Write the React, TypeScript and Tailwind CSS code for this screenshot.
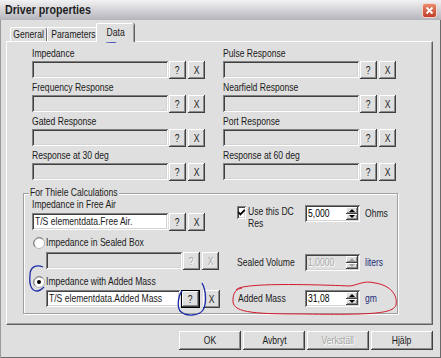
import React from "react";

const raised =
  "shadow-[inset_-1px_-1px_0_#404040,inset_1px_1px_0_#ffffff,inset_-2px_-2px_0_#8c8c8c]";
const sunken =
  "shadow-[inset_1px_1px_0_#808080,inset_-1px_-1px_0_#ffffff,inset_2px_2px_0_#404040,inset_-2px_-2px_0_#d4d4d4]";

// the dialog font is a narrow sans; Liberation Sans squeezed to match
function T({ children, center, className = "" }: { children: React.ReactNode; center?: boolean; className?: string }) {
  return (
    <span
      className={`inline-block scale-x-[0.78] whitespace-nowrap ${center ? "origin-center" : "origin-left"} ${className}`}
    >
      {children}
    </span>
  );
}

function Field({ w, value, white }: { w: string; value?: string; white?: boolean }) {
  return (
    <div
      className={`${w} h-[17px] overflow-hidden whitespace-nowrap pl-[3px] pt-[2px] text-[11px] leading-[13px] ${
        white ? "bg-white" : "bg-[#dfdfdf]"
      } ${sunken}`}
    >
      {value && <T>{value}</T>}
    </div>
  );
}

function SmallBtn({ label, disabled, focus }: { label: string; disabled?: boolean; focus?: boolean }) {
  if (focus) {
    return (
      <div className="flex h-[18px] w-[19px] border border-black">
        <div className={`flex flex-1 items-center justify-center bg-[#dfdfdf] text-[11px] ${raised}`}>
          <T center>{label}</T>
        </div>
      </div>
    );
  }
  return (
    <div
      className={`flex h-[18px] w-[17px] items-center justify-center bg-[#dfdfdf] text-[11px] ${raised} ${
        disabled ? "text-[#a4a4a4] [text-shadow:1px_1px_0_#ffffff]" : "text-[#1a1a1a]"
      }`}
    >
      <T center>{label}</T>
    </div>
  );
}

function FileRow({ value, white, disabled, focus }: { value?: string; white?: boolean; disabled?: boolean; focus?: boolean }) {
  return (
    <div className="flex items-start">
      <Field w="w-[136px]" value={value} white={white} />
      <div className="ml-[1px]">
        <SmallBtn label="?" disabled={disabled} focus={focus} />
      </div>
      <div className={focus ? "ml-[3px]" : "ml-[2px]"}>
        <SmallBtn label="X" disabled={disabled} />
      </div>
    </div>
  );
}

function FileField({ label }: { label: string }) {
  return (
    <div className="flex flex-col">
      <div className="h-[13px] text-[11px] leading-[13px]">
        <T>{label}</T>
      </div>
      <div className="mt-[1px]">
        <FileRow />
      </div>
    </div>
  );
}

function Tri({ up, disabled }: { up?: boolean; disabled?: boolean }) {
  return (
    <svg width="6" height="3" viewBox="0 0 6 3">
      <polygon points={up ? "0,3 3,0 6,3" : "0,0 3,3 6,0"} fill={disabled ? "#a0a0a0" : "#000000"} />
    </svg>
  );
}

function Spin({ value, disabled }: { value: string; disabled?: boolean }) {
  return (
    <div
      className={`flex h-[17px] w-[55px] items-stretch p-[2px] ${sunken} ${
        disabled ? "bg-[#dfdfdf] text-[#a8a8a8] [text-shadow:1px_1px_0_#ffffff]" : "bg-white text-black"
      }`}
    >
      <span className="flex-1 pl-[1px] text-[11px] leading-[13px]">
        <T>{value}</T>
      </span>
      <div className="flex w-[12px] flex-col">
        <div className={`flex flex-1 items-center justify-center bg-[#dfdfdf] ${raised}`}>
          <Tri up disabled={disabled} />
        </div>
        <div className={`flex flex-1 items-center justify-center bg-[#dfdfdf] ${raised}`}>
          <Tri disabled={disabled} />
        </div>
      </div>
    </div>
  );
}

function Radio({ checked }: { checked?: boolean }) {
  return (
    <svg width="12" height="12" viewBox="0 0 12 12">
      <circle cx="6" cy="6" r="5.5" fill="#ffffff" stroke="#b4b4b4" />
      <path d="M2.2 9.8 A5.4 5.4 0 0 1 9.8 2.2" fill="none" stroke="#6e6e6e" />
      {checked && <circle cx="6" cy="6" r="2" fill="#000000" />}
    </svg>
  );
}

function DialogBtn({ label, disabled }: { label: string; disabled?: boolean }) {
  return (
    <div
      className={`flex h-[19px] w-[62px] items-center justify-center bg-[#dfdfdf] text-[11px] ${raised} ${
        disabled ? "text-[#a4a4a4] [text-shadow:1px_1px_0_#ffffff]" : "text-[#1a1a1a]"
      }`}
    >
      <T center>{label}</T>
    </div>
  );
}

export default function App() {
  return (
    <div className="relative flex h-[358px] w-[441px] flex-col overflow-hidden bg-[#dfdfdf] font-['Liberation_Sans',Arial,sans-serif] text-[#1a1a1a] shadow-[inset_1px_0_0_#9a9a9a,inset_-1px_0_0_#6a6a6a,inset_0_-1px_0_#6a6a6a]">
      {/* title bar */}
      <div className="flex h-[20px] items-center justify-between bg-linear-to-b from-[#f2f2f4] via-[#d4d4d8] to-[#b4b4bc] pl-[5px] pr-[4px]">
        <span className="text-[13px] leading-[16px] font-bold text-[#1e1e1e]">
          <T className="scale-x-[0.82]">Driver properties</T>
        </span>
        <div className="flex h-[15px] w-[15px] items-center justify-center rounded-[3px] border border-[#f4d8d0] bg-linear-to-b from-[#e88a70] to-[#c23a24]">
          <svg width="9" height="9" viewBox="0 0 9 9">
            <path d="M1.5 1.5 L7.5 7.5 M7.5 1.5 L1.5 7.5" stroke="#ffffff" strokeWidth="1.8" />
          </svg>
        </div>
      </div>

      {/* tabs */}
      <div className="flex h-[21px] items-end pl-[10px] text-[11px] leading-[13px]">
        <div className="flex h-[14px] w-[37px] items-center justify-center rounded-t-[2px] border-l border-t border-white shadow-[inset_-1px_0_0_#707070]">
          <T center>General</T>
        </div>
        <div className="flex h-[14px] w-[51px] items-center justify-center rounded-t-[2px] border-l border-t border-white">
          <T center>Parameters</T>
        </div>
        <div className="relative z-10 -mb-[1px] -ml-[2px] flex h-[19px] w-[38px] items-start justify-center rounded-t-[2px] border-l border-t border-white bg-[#dfdfdf] pt-[2px] shadow-[inset_-1px_0_0_#a0a0a0,1px_0_0_#606060]">
          <T center>Data</T>
        </div>
      </div>

      {/* tab panel */}
      <div className="ml-[6px] mr-[8px] flex h-[284px] flex-col border-b border-l border-r border-t border-b-[#606060] border-l-white border-r-[#606060] border-t-white shadow-[inset_-1px_-1px_0_#a0a0a0]">
        <div className="ml-[25px] mt-[5px] grid grid-cols-[174px_174px] gap-x-[17px] gap-y-[2px]">
          <FileField label="Impedance" />
          <FileField label="Pulse Response" />
          <FileField label="Frequency Response" />
          <FileField label="Nearfield Response" />
          <FileField label="Gated Response" />
          <FileField label="Port Response" />
          <FileField label="Response at 30 deg" />
          <FileField label="Response at 60 deg" />
        </div>

        {/* group box */}
        <div className="relative ml-[16px] mt-[12px] flex h-[121px] w-[375px] border border-[#a0a0a0] pl-[8px] text-[11px] leading-[13px] shadow-[inset_1px_1px_0_#ffffff,1px_1px_0_#ffffff]">
          <span className="absolute -top-[8px] left-[5px] w-[90px] bg-[#dfdfdf] px-[1px]">
            <T>For Thiele Calculations</T>
          </span>

          <div className="flex w-[188px] flex-col">
            <div className="mt-[4px] h-[13px]">
              <T>Impedance in Free Air</T>
            </div>
            <div className="mt-[2px]">
              <FileRow value="T/S elementdata.Free Air." white />
            </div>
            <div className="ml-[1px] mt-[5px] flex h-[13px] items-center">
              <Radio />
              <span className="ml-[1px]">
                <T>Impedance in Sealed Box</T>
              </span>
            </div>
            <div className="ml-[14px] mt-[3px]">
              <FileRow disabled />
            </div>
            <div className="ml-[1px] mt-[5px] flex h-[13px] items-center">
              <Radio checked />
              <span className="ml-[1px]">
                <T>Impedance with Added Mass</T>
              </span>
            </div>
            <div className="ml-[14px] mt-[2px]">
              <FileRow value="T/S elementdata.Added Mass" white focus />
            </div>
          </div>

          <div className="ml-[17px] flex flex-col">
            <div className="mt-[11px] flex items-start">
              <div className="flex w-[68px] items-start">
                <div className={`mt-[1px] flex h-[13px] w-[13px] items-center justify-center bg-white ${sunken}`}>
                  <svg width="9" height="9" viewBox="0 0 9 9">
                    <path d="M1.2 4 L3.4 6.4 L7.8 1.8" fill="none" stroke="#000000" strokeWidth="1.8" />
                  </svg>
                </div>
                <span className="ml-[2px] flex flex-col leading-[12px]">
                  <T>Use this DC</T>
                  <T>Res</T>
                </span>
              </div>
              <Spin value="5,000" />
              <span className="ml-[5px] leading-[17px]">
                <T>Ohms</T>
              </span>
            </div>
            <div className="mt-[25px] flex h-[17px] items-center">
              <span className="w-[68px]">
                <T>Sealed Volume</T>
              </span>
              <Spin value="1,0000" disabled />
              <span className="ml-[5px] text-[#1c2a7a]">
                <T>liters</T>
              </span>
            </div>
            <div className="mt-[19px] flex h-[17px] items-center">
              <span className="w-[68px] pl-[1px]">
                <T>Added Mass</T>
              </span>
              <Spin value="31,08" />
              <span className="ml-[5px] text-[#1c2a7a]">
                <T>gm</T>
              </span>
            </div>
          </div>
        </div>
      </div>

      {/* dialog buttons */}
      <div className="mr-[8px] mt-[6px] flex justify-end gap-[2px]">
        <DialogBtn label="OK" />
        <DialogBtn label="Avbryt" />
        <DialogBtn label="Verkställ" disabled />
        <DialogBtn label="Hjälp" />
      </div>

      {/* hand-drawn annotations */}
      <svg className="pointer-events-none absolute left-0 top-0" width="441" height="358" viewBox="0 0 441 358">
        <path
          d="M101 28 C106 24 118 23 122 27 C126 32 124 40 115 42 C106 43 98 40 98 34 C98 30 99 28 102 27"
          fill="none"
          stroke="#1a2aa8"
          strokeWidth="1.3"
        />
        <path
          d="M43 267 C36 264 30 267 30 275 C29 284 31 291 37 291 C40 291 42 289 44 287"
          fill="none"
          stroke="#1a2aa8"
          strokeWidth="1.3"
        />
        <path
          d="M202 283 C206 290 207 303 203 310 C199 316 186 317 180 311 C177 306 178 296 182 291"
          fill="none"
          stroke="#1a2aa8"
          strokeWidth="1.3"
        />
        <path
          d="M236 290 C240 283 300 284 350 286 C358 285 364 280 375 283 C390 285 398 295 396 305 C393 314 370 315 300 314 C250 314 232 312 233 300 C233 293 236 289 242 288"
          fill="none"
          stroke="#d01828"
          strokeWidth="1"
        />
      </svg>
    </div>
  );
}
